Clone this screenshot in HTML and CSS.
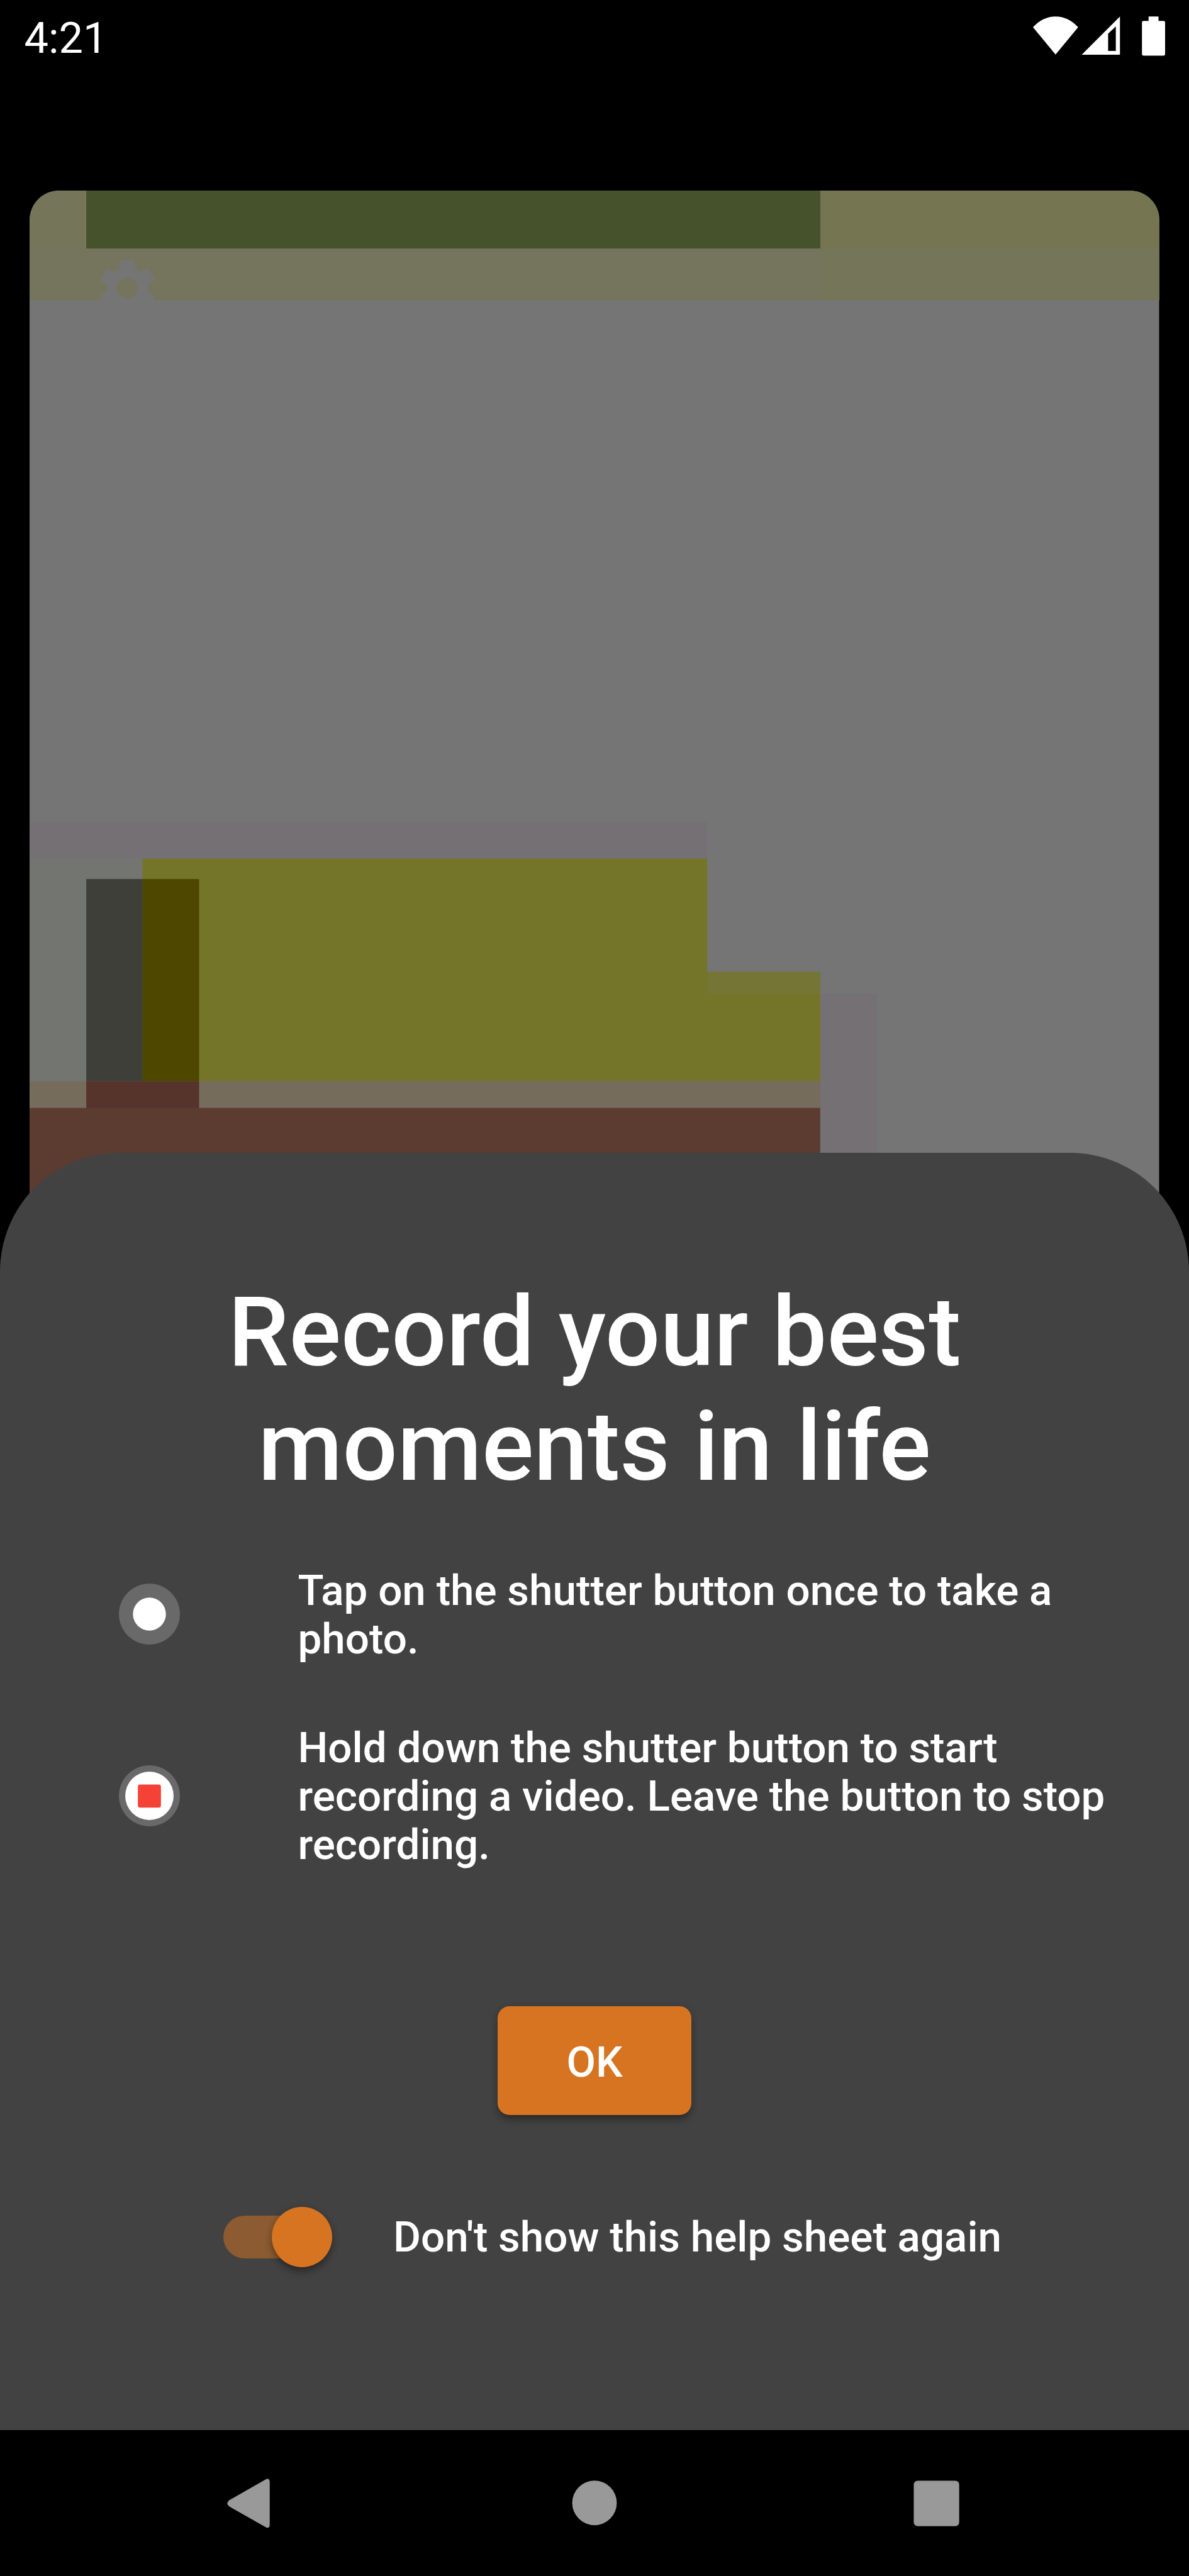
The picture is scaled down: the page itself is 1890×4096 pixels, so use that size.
FILE: index.html
```html
<!DOCTYPE html>
<html lang="en">
<head>
<meta charset="utf-8">
<title>Camera help</title>
<link rel="stylesheet" href="styles.css">
</head>
<body>
<div class="screen">
  <header class="status">
    <span class="clock">4:21</span>
    <svg class="status-icons" viewBox="1876 0 240 140" aria-hidden="true">
      <path d="M1917 99 1876 49.5Q1894 30 1917 30T1958 49.5Z"/>
      <path fill-rule="evenodd" d="M1964.5 99.5 2034 30V99.5ZM2012.5 92.5H2026.5V48L2012.5 61Z"/>
      <path d="M2086 30h18v8h9q3 0 3 3v57q0 3-3 3h-36q-3 0-3-3V41q0-3 3-3h9z"/>
    </svg>
  </header>

  <main class="preview">
    <svg viewBox="54 346 2052 1974" aria-hidden="true">
      <rect x="54" y="346" width="2052" height="1974" fill="#757575"/>
      <rect x="54" y="346" width="103" height="105.5" fill="#75755a"/>
      <rect x="157" y="346" width="1333.5" height="105.5" fill="#46522b"/>
      <rect x="1490.5" y="346" width="616" height="105.5" fill="#757552"/>
      <rect x="54" y="451.5" width="1436.5" height="94" fill="#75755e"/>
      <rect x="1490.5" y="451.5" width="616" height="94" fill="#75755a"/>
      <path fill="#757575" fill-rule="evenodd" transform="translate(171.4 462.9) scale(5.03)" d="M19.43 12.98c.04-.32.07-.64.07-.98s-.03-.66-.07-.98l2.11-1.65c.19-.15.24-.42.12-.64l-2-3.46c-.12-.22-.39-.3-.61-.22l-2.49 1c-.52-.4-1.08-.73-1.69-.98l-.38-2.65C14.46 2.18 14.25 2 14 2h-4c-.25 0-.46.18-.49.42l-.38 2.65c-.61.25-1.17.59-1.69.98l-2.49-1c-.23-.09-.49 0-.61.22l-2 3.46c-.13.22-.07.49.12.64l2.11 1.65c-.04.32-.07.65-.07.98s.03.66.07.98l-2.11 1.65c-.19.15-.24.42-.12.64l2 3.46h15.32l2-3.46c.12-.22.07-.49-.12-.64zM12 15.75A3.75 3.75 0 1 1 12 8.250a3.75 3.75 0 0 1 0 7.5z"/>
      <rect x="54" y="1494" width="1231" height="66" fill="#757073"/>
      <rect x="54" y="1560" width="205.4" height="404.5" fill="#737570"/>
      <path fill="#757529" d="M259.4 1560H1285V1765.5H1490.5V1964.5H259.4Z"/>
      <rect x="1285" y="1765.5" width="205.5" height="39.5" fill="#757535"/>
      <rect x="157" y="1597" width="102.4" height="367.5" fill="#3f3f3a"/>
      <rect x="259.4" y="1597" width="102.6" height="367.5" fill="#4d4700"/>
      <rect x="54" y="1964.5" width="1436.5" height="48.5" fill="#756c5c"/>
      <rect x="157" y="1964.5" width="205" height="49" fill="#57342b"/>
      <rect x="54" y="2013" width="1436.5" height="307" fill="#5c3c30"/>
      <rect x="1490.5" y="1806" width="103" height="514" fill="#757073"/>
    </svg>
  </main>

  <section class="sheet">
    <h1 class="title">Record your best<br>moments in life</h1>
    <div class="tip tip-photo">
      <svg class="tip-icon" viewBox="0 0 111 111" aria-hidden="true">
        <circle cx="55.5" cy="55.5" r="55.5" fill="#696969"/>
        <circle cx="55.5" cy="55.5" r="30" fill="#fff"/>
      </svg>
      <p>Tap on the shutter button once to take a<br>photo.</p>
    </div>
    <div class="tip tip-video">
      <svg class="tip-icon" viewBox="0 0 111 111" aria-hidden="true">
        <circle cx="55.5" cy="55.5" r="55.5" fill="#696969"/>
        <circle cx="55.5" cy="55.5" r="44" fill="#fff"/>
        <rect x="34.5" y="35" width="42" height="42" rx="4" fill="#f44336"/>
      </svg>
      <p>Hold down the shutter button to start<br>recording a video. Leave the button to stop<br>recording.</p>
    </div>
    <button class="ok" type="button">OK</button>
    <label class="toggle">
      <span class="switch"><span class="thumb"></span></span>
      <span class="toggle-text">Don't show this help sheet again</span>
    </label>
  </section>

  <nav class="navbar">
    <svg viewBox="0 4416 2160 264" aria-hidden="true">
      <path d="M417 4543 483 4505.500Q490 4502 490 4511V4587Q490 4596 483 4592.500L417 4555Q409 4549 417 4543Z"/>
      <circle cx="1080" cy="4548.300" r="40.500"/>
      <rect x="1660" y="4508" width="82.500" height="82.500" rx="7"/>
    </svg>
  </nav>
</div>
</body>
</html>
```
FILE: styles.css
```css
* { box-sizing: border-box; }

body {
  margin: 0;
  background: #000;
  color: #fff;
  font-family: Roboto, "Liberation Sans", sans-serif;
}

.screen {
  display: grid;
  grid-template-columns: 100%;
  grid-template-rows: 302.75px 1530.375px 196.875px 1834px 232px;
  width: 1890px;
  height: 4096px;
  overflow: hidden;
}

.status {
  grid-row: 1;
  display: flex;
  justify-content: space-between;
  align-items: flex-start;
  padding: 0 38.5px 0 38.5px;
}

.clock {
  padding-top: 21px;
  font-size: 68.5px;
  line-height: 80px;
}

.status-icons {
  width: 210px;
  height: 122.5px;
  fill: #fff;
}

.preview {
  grid-row: 2 / 4;
  grid-column: 1;
  margin: 0 47.25px;
  border-radius: 47.25px 47.25px 0 0;
  overflow: hidden;
}

.preview svg {
  display: block;
  width: 1795.5px;
  height: 1727.25px;
}

.sheet {
  grid-row: 3 / 5;
  grid-column: 1;
  z-index: 1;
  display: flex;
  flex-direction: column;
  align-items: center;
  background: #424242;
  border-radius: 189px 189px 0 0;
}

.title {
  margin: 195px 0 0;
  font-size: 154px;
  font-weight: 500;
  line-height: 182px;
  text-align: center;
}

.tip {
  display: flex;
  align-items: center;
  align-self: stretch;
  padding-left: 189px;
  font-size: 67.4px;
  font-weight: 500;
  line-height: 77px;
}

.tip p {
  margin: 0;
  white-space: nowrap;
}

.tip-icon {
  width: 97px;
  height: 97px;
  margin-right: 187.5px;
}

.tip-photo { margin-top: 98px; }
.tip-photo .tip-icon { margin-bottom: 2px; }
.tip-video { margin-top: 96px; }

.ok {
  margin-top: 219px;
  width: 308px;
  height: 173px;
  padding: 4px 0 0;
  border: 0;
  border-radius: 19px;
  background: #d67421;
  box-shadow: 0 10px 14px -4px rgba(0, 0, 0, .3), 0 3px 12px rgba(0, 0, 0, .2);
  color: #fff;
  font: 500 67.4px/80px Roboto, "Liberation Sans", sans-serif;
}

.toggle {
  display: flex;
  align-items: center;
  align-self: stretch;
  margin-top: 146px;
  padding-left: 355px;
  font-size: 67.4px;
  font-weight: 500;
  line-height: 96px;
}

.switch {
  display: flex;
  align-items: center;
  justify-content: flex-end;
  width: 173px;
  height: 68px;
  margin-right: 97px;
  border-radius: 34px;
  background: #8c5b31;
}

.thumb {
  flex: none;
  width: 96px;
  height: 96px;
  border-radius: 50%;
  background: #d67421;
  box-shadow: 0 9px 13px -3px rgba(0, 0, 0, .35), 0 2px 12px rgba(0, 0, 0, .2);
}

.navbar {
  grid-row: 5;
  background: #000;
}

.navbar svg {
  display: block;
  width: 1890px;
  height: 231px;
  fill: #999;
}
```
